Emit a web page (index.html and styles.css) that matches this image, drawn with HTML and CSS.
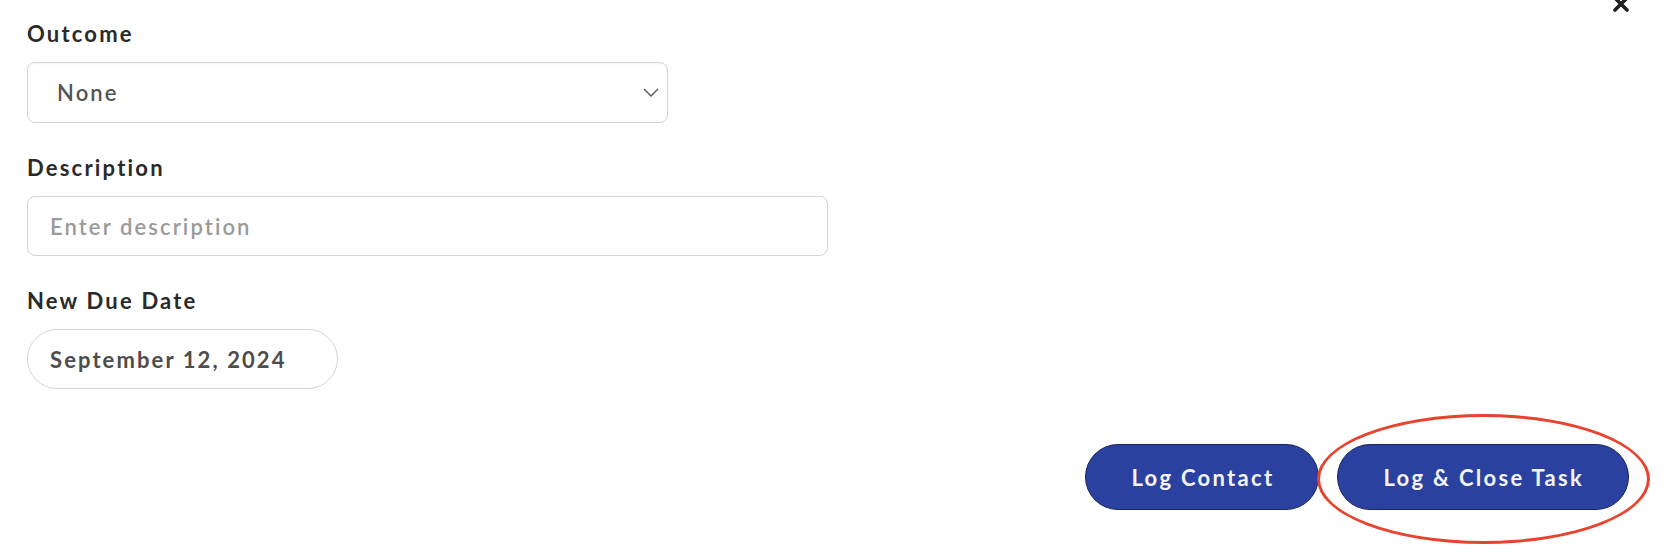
FILE: index.html
```html
<!DOCTYPE html>
<html lang="en">
<head>
<meta charset="utf-8">
<title>Log Contact</title>
<link rel="stylesheet" href="styles.css">
</head>
<body>
<div class="modal">
  <button class="close" aria-label="Close">
    <svg width="18" height="18" viewBox="0 0 18 18"><path d="M3 3 L15 15 M15 3 L3 15" stroke="#1f1f1f" stroke-width="3.6" stroke-linecap="round" fill="none"/></svg>
  </button>
  <div class="form">
    <div class="field">
      <label class="label">Outcome</label>
      <div class="select">
        <span class="select-value">None</span>
        <svg class="chevron" width="16" height="9" viewBox="0 0 16 9"><path d="M1 1 L8 8 L15 1" stroke="#555" stroke-width="1.4" fill="none"/></svg>
      </div>
    </div>
    <div class="field">
      <label class="label">Description</label>
      <div class="input placeholder">Enter description</div>
    </div>
    <div class="field">
      <label class="label">New Due Date</label>
      <div class="date">September 12, 2024</div>
    </div>
  </div>
  <div class="actions">
    <button class="btn">Log Contact</button>
    <span class="highlight"><button class="btn">Log &amp; Close Task</button></span>
  </div>
</div>
</body>
</html>
```
FILE: styles.css
```css
* { box-sizing: border-box; }
html, body { margin: 0; background: #ffffff; }
body { font-family: Lato, "Noto Sans", sans-serif; }

.modal {
  position: relative;
  width: 1668px;
  height: 552px;
  padding: 22px 0 0 27px;
  overflow: hidden;
}

.close {
  position: absolute;
  top: -5px;
  left: 1612px;
  width: 18px;
  height: 18px;
  padding: 0;
  border: 0;
  background: none;
}
.close svg { display: block; }

.form { display: flex; flex-direction: column; }
.field { display: flex; flex-direction: column; align-items: flex-start; }
.field + .field { margin-top: 33px; }

.label {
  font-size: 22px;
  line-height: 24px;
  font-weight: 700;
  letter-spacing: 2.2px;
  color: #2a2a2a;
  margin-bottom: 16px;
}

.select, .input, .date {
  height: 60px;
  border: 1px solid #d5d5d5;
  background: #fff;
  display: flex;
  align-items: center;
  font-size: 22px;
  letter-spacing: 2.1px;
}

.select {
  width: 641px;
  height: 61px;
  border-radius: 8px;
  justify-content: space-between;
  padding: 0 8px 0 29px;
  color: #555555;
  font-weight: 600;
  box-shadow: inset 0 1px 2px rgba(0,0,0,0.05);
}
.chevron { display: block; }

.input {
  width: 801px;
  border-radius: 8px;
  padding-left: 22px;
  color: #9a9a9a;
  font-weight: 600;
}

.date {
  width: 311px;
  border-radius: 30px;
  padding-left: 22px;
  color: #4d4d4d;
  font-weight: 700;
}

.actions {
  display: flex;
  justify-content: flex-end;
  align-items: center;
  gap: 18px;
  margin-top: 55px;
  padding-right: 39px;
}

.btn {
  height: 66px;
  padding: 0 44px 0 45px;
  border: 1px solid #1b2566;
  border-radius: 33px;
  background: #2a41a0;
  color: #f4f4f8;
  font-family: Lato, "Noto Sans", sans-serif;
  font-size: 22px;
  font-weight: 700;
  letter-spacing: 2.3px;
  cursor: pointer;
}

.highlight { position: relative; display: inline-flex; }
.highlight::after {
  content: "";
  position: absolute;
  left: -20px;
  right: -21px;
  top: -30px;
  bottom: -34px;
  border: 3px solid #e8432e;
  border-radius: 50%;
  pointer-events: none;
}
```
